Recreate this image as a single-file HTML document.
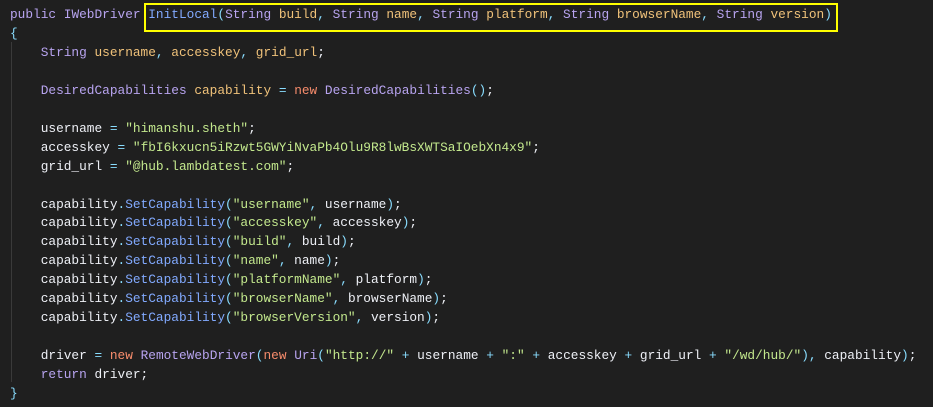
<!DOCTYPE html>
<html><head><style>
body{margin:0;background:#1f1f1f;width:933px;height:407px;overflow:hidden;position:relative}
pre{margin:0;position:absolute;left:10px;top:6px;font-family:"Liberation Mono",monospace;font-size:12.8px;line-height:18.95px;color:#eeffff}
.k{color:#b8a4f0}.t{color:#b8a4f0}.m{color:#82aaff}.p{color:#89ddff}.s{color:#c3e88d}.v{color:#f0c27a}.n{color:#f78c6c}.w{color:#eef0f6}
.box{position:absolute;left:144px;top:3px;width:690px;height:25px;border:2px solid #ffff00}
.guide{position:absolute;left:11px;top:42px;width:1px;height:340px;background:#3a3a3a}
</style></head><body>
<div class="guide"></div>
<pre><span class="k">public</span> <span class="t">IWebDriver</span> <span class="m">InitLocal</span><span class="p">(</span><span class="t">String</span> <span class="v">build</span><span class="p">,</span> <span class="t">String</span> <span class="v">name</span><span class="p">,</span> <span class="t">String</span> <span class="v">platform</span><span class="p">,</span> <span class="t">String</span> <span class="v">browserName</span><span class="p">,</span> <span class="t">String</span> <span class="v">version</span><span class="p">)</span>
<span class="p">{</span>
    <span class="t">String</span> <span class="v">username</span><span class="p">,</span> <span class="v">accesskey</span><span class="p">,</span> <span class="v">grid_url</span><span class="w">;</span>

    <span class="t">DesiredCapabilities</span> <span class="v">capability</span> <span class="p">=</span> <span class="n">new</span> <span class="t">DesiredCapabilities</span><span class="p">()</span><span class="w">;</span>

<span class="w">    username <span class="p">=</span> <span class="s">"himanshu.sheth"</span>;
    accesskey <span class="p">=</span> <span class="s">"fbI6kxucn5iRzwt5GWYiNvaPb4Olu9R8lwBsXWTSaIOebXn4x9"</span>;
    grid_url <span class="p">=</span> <span class="s">"@hub.lambdatest.com"</span>;

    capability<span class="p">.</span><span class="m">SetCapability</span><span class="p">(</span><span class="s">"username"</span><span class="p">,</span> username<span class="p">)</span>;
    capability<span class="p">.</span><span class="m">SetCapability</span><span class="p">(</span><span class="s">"accesskey"</span><span class="p">,</span> accesskey<span class="p">)</span>;
    capability<span class="p">.</span><span class="m">SetCapability</span><span class="p">(</span><span class="s">"build"</span><span class="p">,</span> build<span class="p">)</span>;
    capability<span class="p">.</span><span class="m">SetCapability</span><span class="p">(</span><span class="s">"name"</span><span class="p">,</span> name<span class="p">)</span>;
    capability<span class="p">.</span><span class="m">SetCapability</span><span class="p">(</span><span class="s">"platformName"</span><span class="p">,</span> platform<span class="p">)</span>;
    capability<span class="p">.</span><span class="m">SetCapability</span><span class="p">(</span><span class="s">"browserName"</span><span class="p">,</span> browserName<span class="p">)</span>;
    capability<span class="p">.</span><span class="m">SetCapability</span><span class="p">(</span><span class="s">"browserVersion"</span><span class="p">,</span> version<span class="p">)</span>;

    driver <span class="p">=</span> <span class="n">new</span> <span class="t">RemoteWebDriver</span><span class="p">(</span><span class="n">new</span> <span class="t">Uri</span><span class="p">(</span><span class="s">"http://"</span> <span class="p">+</span> username <span class="p">+</span> <span class="s">":"</span> <span class="p">+</span> accesskey <span class="p">+</span> grid_url <span class="p">+</span> <span class="s">"/wd/hub/"</span><span class="p">),</span> capability<span class="p">)</span>;
    <span class="k">return</span> driver;</span>
<span class="p">}</span></pre>
<div class="box"></div>
</body></html>
